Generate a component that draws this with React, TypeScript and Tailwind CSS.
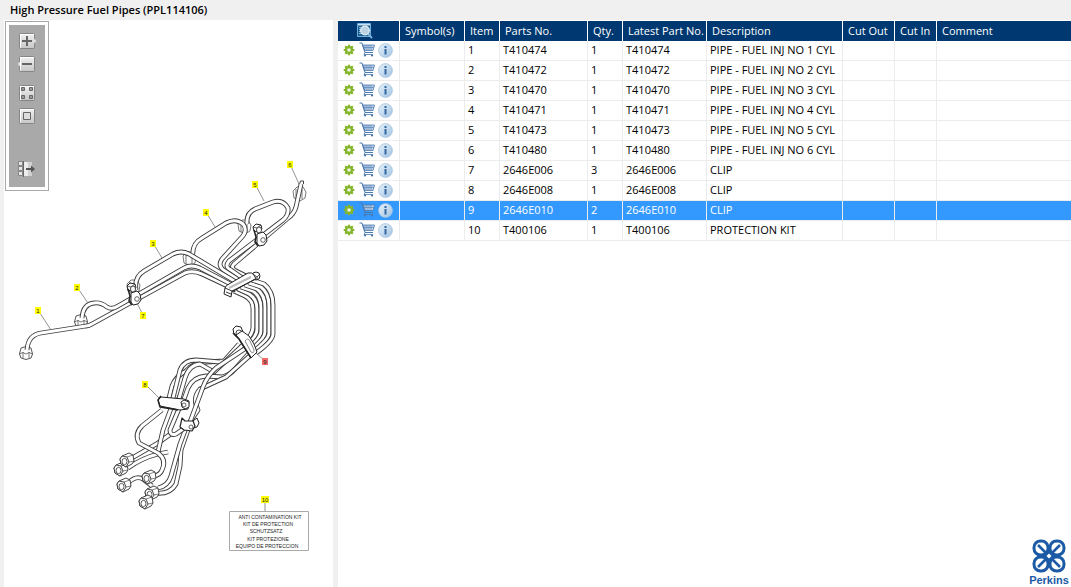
import { useState } from 'react';
import type { ReactNode } from 'react';
import clsx from 'clsx';

interface Part {
  item: number;
  partNo: string;
  qty: number;
  description: string;
}

const parts: Part[] = [
  { item: 1, partNo: 'T410474', qty: 1, description: 'PIPE - FUEL INJ NO 1 CYL' },
  { item: 2, partNo: 'T410472', qty: 1, description: 'PIPE - FUEL INJ NO 2 CYL' },
  { item: 3, partNo: 'T410470', qty: 1, description: 'PIPE - FUEL INJ NO 3 CYL' },
  { item: 4, partNo: 'T410471', qty: 1, description: 'PIPE - FUEL INJ NO 4 CYL' },
  { item: 5, partNo: 'T410473', qty: 1, description: 'PIPE - FUEL INJ NO 5 CYL' },
  { item: 6, partNo: 'T410480', qty: 1, description: 'PIPE - FUEL INJ NO 6 CYL' },
  { item: 7, partNo: '2646E006', qty: 3, description: 'CLIP' },
  { item: 8, partNo: '2646E008', qty: 1, description: 'CLIP' },
  { item: 9, partNo: '2646E010', qty: 2, description: 'CLIP' },
  { item: 10, partNo: 'T400106', qty: 1, description: 'PROTECTION KIT' },
];

const columns = [
  { label: 'Symbol(s)', width: 'w-[65px]' },
  { label: 'Item', width: 'w-[35px]' },
  { label: 'Parts No.', width: 'w-[88px]' },
  { label: 'Qty.', width: 'w-[35px]' },
  { label: 'Latest Part No.', width: 'w-[84px]' },
  { label: 'Description', width: 'w-[136px]' },
  { label: 'Cut Out', width: 'w-[52px]' },
  { label: 'Cut In', width: 'w-[42px]' },
  { label: 'Comment', width: '' },
];

/* ---------- icons ---------- */

function GearIcon() {
  return (
    <svg className="h-3 w-3" viewBox="0 0 12 12">
      <g stroke="#84b52c" strokeWidth="2.2">
        <path d="M6 .7v10.6M.7 6h10.6M2.2 2.2l7.6 7.6M9.8 2.2l-7.6 7.6" />
      </g>
      <circle cx="6" cy="6" r="3" fill="none" stroke="#84b52c" strokeWidth="2.2" />
      <circle cx="6" cy="6" r="1.8" fill="#eef5df" />
    </svg>
  );
}

function CartIcon() {
  return (
    <svg className="h-4 w-4" viewBox="0 0 16 16" fill="none" stroke="#4a78ae">
      <path d="M3.500 3h12l-1.500 5.500H5.500z" fill="#c3d5ea" strokeWidth=".8" />
      <path d="M6 3v5M8 3v5M10 3v5M12 3v5M4 5.500h11" strokeWidth=".6" />
      <path d="M.5 1H3l3 9.500h8" strokeWidth="1" />
      <path d="M6 10.500L5 12.500h9" strokeWidth=".8" />
      <circle cx="6" cy="13.500" r="1.100" fill="#4a78ae" stroke="none" />
      <circle cx="13" cy="13.500" r="1.100" fill="#4a78ae" stroke="none" />
    </svg>
  );
}

function InfoIcon() {
  return (
    <svg className="h-[15px] w-[15px]" viewBox="0 0 15 15">
      <defs>
        <linearGradient id="info-fill" x1="0" y1="0" x2="1" y2="1">
          <stop offset="0" stopColor="#eaf3fa" />
          <stop offset="1" stopColor="#9fc3e2" />
        </linearGradient>
      </defs>
      <circle cx="7.5" cy="7.5" r="6.9" fill="url(#info-fill)" stroke="#a5c4de" strokeWidth=".8" />
      <path d="M6.5 3h2v2h-2zM6.5 6h2v5.500h-2z" fill="#3468a4" />
    </svg>
  );
}

function SearchSheetIcon() {
  return (
    <svg className="h-4 w-4" viewBox="0 0 16 16">
      <path d="M.5 .5h13v13H.5z" fill="#1d5e92" stroke="#6fb0dc" />
      <path d="M1 1h12v1.500H1z" fill="#c8e2f3" />
      <path d="M2 4.500h3M2 6.500h2M2 8.500h2M2 10.500h3" stroke="#8cc1e4" />
      <path d="M11 11l4 4" stroke="#7fb4d8" strokeWidth="2" />
      <circle cx="8" cy="7.500" r="4.300" fill="#b9d2e4" stroke="#e8f3fa" strokeWidth="1.200" />
    </svg>
  );
}

function ToolFace({ children }: { children?: ReactNode }) {
  return (
    <svg className="h-4 w-5" viewBox="0 0 20 16">
      <defs>
        <linearGradient id="tool-face" x1="0" y1="0" x2="0" y2="1">
          <stop offset="0" stopColor="#f2f2f2" />
          <stop offset="1" stopColor="#c6c6c6" />
        </linearGradient>
      </defs>
      <rect x="2.500" y=".5" width="15" height="15" rx="1" fill="url(#tool-face)" stroke="#858585" />
      <path d="M3.500 14.500V1.500h13" fill="none" stroke="#fff" />
      {children}
    </svg>
  );
}

function PerkinsLogo() {
  return (
    <div className="flex w-10 flex-col items-center text-[#1b5aa5]">
      <svg className="h-[34px] w-[34px]" viewBox="0 0 34 34" fill="none" stroke="currentColor">
        <g strokeWidth="3">
          <rect x="2" y="2" width="14" height="14" rx="6.500" />
          <rect x="18" y="2" width="14" height="14" rx="6.500" />
          <rect x="2" y="18" width="14" height="14" rx="6.500" />
          <rect x="18" y="18" width="14" height="14" rx="6.500" />
        </g>
        <path d="M6 6l8 8M28 6l-8 8M6 28l8-8M28 28l-8-8" strokeWidth="2.600" />
        <path d="M17 11l6 6-6 6-6-6z" fill="currentColor" stroke="none" />
        <path d="M17 14.500l2.500 2.500-2.500 2.500-2.500-2.500z" fill="#fff" stroke="none" />
      </svg>
      <span className="font-['Liberation_Sans',sans-serif] text-[11px] leading-[14px] font-bold">Perkins</span>
    </div>
  );
}

/* ---------- drawing ---------- */

// Runs are listed back to front: later pipes cover earlier ones.
const pipes = [
  // tails below the clips
  'M132 458 L158 443 L172 433',
  'M128 468 Q142 458 158 454 L168 452',
  'M176 395 L163 430 L158 452',
  'M128 483 Q136 475 143 479 L152 486',
  'M154 493 Q170 495 176 484 L180 466 L181 450 L190 424',
  'M158 488 Q168 486 171 476 L180 444 L186 428',
  'M181 404 L170 430 Q170 436 176 434 L186 427',
  'M162 410 L142 426 Q134 434 139 443 L158 453 Q167 460 162 470 Q160 475 154 476',
  // bundle between the middle clips
  'M168 402 L172 386 Q176 376 186 371 Q194 362 206 362 L224 361 L239 344',
  'M172 402 L180 370 Q184 360 196 360 L220 362',
  'M178 402 L185 378 Q189 365 200 364 Q207 368 214 372 L244 344',
  'M183 402 L188 388 Q193 377 206 376 L222 377 Q230 375 235 369 L250 352',
  'M186 428 L198 410 Q192 398 200 389 L226 377 L254 352',
  'M190 422 L203 387 Q207 376 216 368 L246 348',
  // loop on the right hand side
  'M234 291 L245 296 Q253 300 253 309 L253 327 Q253 333 246 341',
  'M238 289 L249 294 Q257 299 257 309 L257 329 Q257 336 248 344',
  'M241 287 L253 291 Q261 297 261 308 L261 331 Q261 337 250 347',
  'M245 285 L257 289 Q265 295 265 307 L265 332 Q265 338 252 349',
  'M249 283 L261 287 Q269 293 269 306 L269 333 Q269 339 254 351',
  'M252 280 L264 284 Q273 291 273 305 L273 334 Q273 341 256 353',
  // individual runs
  'M301 184 L296 207 Q294 214 288 218 L234 264 Q230 268 236 271 L252 279',
  'M247 224 Q246 213 255 209 L273 202 Q283 199 288 208 Q289 215 283 220 L229 261 Q224 267 231 270 L248 282',
  'M193 258 Q191 244 202 238 L226 223 Q236 218 243 224 Q248 230 242 237 L222 259 Q217 266 225 271 L245 284',
  'M27 350 Q28 335 41 333 L86 326 Q89 326 92 324 L185 273 Q193 270 202 274 L236 290',
  'M82 318 Q83 304 94 303 Q101 302 107 307 Q112 310 118 306 L184 268 Q191 264 200 268 L238 288',
  'M136 290 Q134 277 144 271 L173 254 Q181 250 189 254 L241 285',
];

const uprightNuts = [
  { x: 26, y: 352 },
  { x: 81, y: 320 },
];

const tiltedNuts = [
  { x: 121, y: 469 },
  { x: 127, y: 460 },
  { x: 124, y: 485 },
  { x: 149, y: 477 },
  { x: 152, y: 493 },
  { x: 146, y: 502 },
];

// Connections seen from behind the pipe ends.
const rearNuts = [
  { x: 133, y: 287 },
  { x: 189, y: 259 },
  { x: 244, y: 227 },
  { x: 299, y: 194 },
];

const callouts = [
  { id: 1, x: 38, y: 310, to: [51, 330] },
  { id: 2, x: 77, y: 287, to: [88, 303] },
  { id: 3, x: 153, y: 243, to: [162, 258] },
  { id: 4, x: 206, y: 212, to: [215, 227] },
  { id: 5, x: 255, y: 184, to: [264, 201] },
  { id: 6, x: 290, y: 164, to: [299, 184] },
  { id: 7, x: 143, y: 315, to: [137, 303] },
  { id: 8, x: 145, y: 384, to: [159, 398] },
  { id: 9, x: 265, y: 361, to: [256, 353] },
  { id: 10, x: 265, y: 499, to: [265, 511] },
];

const kitLines = [
  { text: 'ANTI CONTAMINATION KIT', x: 270, y: 519 },
  { text: 'KIT DE PROTECTION', x: 268, y: 526 },
  { text: 'SCHUTZSATZ', x: 266, y: 533 },
  { text: 'KIT PROTEZIONE', x: 268, y: 541 },
  { text: 'EQUIPO DE PROTECCION', x: 267, y: 548 },
];

function UprightNut({ x, y }: { x: number; y: number }) {
  return (
    <g transform={`translate(${x} ${y})`} fill="#fff" stroke="#444" strokeWidth=".9">
      <path d="M-5 -4 L-6.500 2 L-5 6 L0 7.500 L5 6 L6.500 2 L5 -4 Q0 -7 -5 -4z" />
      <path d="M-6.500 2 Q-3 -1 0 2 Q3 -1 6.500 2 M-3 0 L-3 6 M3 0 L3 6" fill="none" strokeWidth=".7" />
    </g>
  );
}

function TiltedNut({ x, y }: { x: number; y: number }) {
  return (
    <g transform={`translate(${x} ${y})`} fill="#fff" stroke="#333" strokeWidth=".9">
      <path d="M-5 -4 L2 -7 L6 -5 L7 1 L5 4 L-1 7 L-6 4 L-7 -1z" />
      <path d="M-7 -1 L-5 -4 L0 -3 L2 2 L-1 7 L-6 4z" />
      <path d="M0 -3 L6 -5 M2 2 L7 1" strokeWidth=".6" />
      <ellipse cx="-2.500" cy="1.500" rx="2.500" ry="3.200" strokeWidth=".8" />
    </g>
  );
}

function SmallClamp({ x, y }: { x: number; y: number }) {
  return (
    <g transform={`translate(${x} ${y})`} fill="#fff" stroke="#222">
      <path d="M-8 -11 L-5 -14 L0 -13 L1 -9 L-3 -6 L-7 -7z" />
      <path d="M-8 -11 L-4 -10 L0 -13 M-4 -10 L-3 -6" fill="none" strokeWidth=".7" />
      <ellipse cx="-2" cy="-8" rx="2.500" ry="3" strokeWidth=".8" />
      <path d="M-4 -4 L2 -6 L5 -3 L6 3 L3 7 L-2 8 L-4 5z" />
      <path d="M-7 -8 L-5 -1 L-6 4 L-3 8" fill="none" strokeWidth="1.500" />
      <circle cx="2" cy="2" r="2.300" strokeWidth=".7" />
    </g>
  );
}

function PartsDrawing({ activeItem }: { activeItem: number }) {
  return (
    <svg
      className="block h-[567px] w-[329px] shrink-0"
      viewBox="4 20 329 567"
      role="img"
      aria-label="High pressure fuel pipes"
      strokeLinejoin="round"
    >
      {rearNuts.map((nut) => (
        <g key={nut.x} fill="#fff" stroke="#555" strokeWidth=".8">
          <path d={`M${nut.x - 6} ${nut.y - 3}l4 -4 6 0 3 5 -1 6 -5 3 -6 -3z`} />
          <path d={`M${nut.x - 3} ${nut.y - 5}v10M${nut.x + 3} ${nut.y - 5}v10`} />
        </g>
      ))}

      {uprightNuts.map((nut) => (
        <UprightNut key={nut.y} {...nut} />
      ))}

      {pipes.map((d) => (
        <g key={d} fill="none">
          <path d={d} stroke="#3c3c3c" strokeWidth="4.800" />
          <path d={d} stroke="#fff" strokeWidth="3" />
        </g>
      ))}
      <path d="M299.500 184l1-3 3 0 0 3" fill="#fff" stroke="#444" />

      {tiltedNuts.map((nut) => (
        <TiltedNut key={nut.y} {...nut} />
      ))}

      <SmallClamp x={135} y={297} />
      <SmallClamp x={261} y={238} />

      {/* Long clips */}
      <g fill="#fff" stroke="#222">
        <circle cx="256" cy="276" r="4" />
        <path d="M253 274 L257 277 L260 274 M257 277 L257 280" fill="none" strokeWidth=".8" />
        <path d="M225 288 Q226 285 229 284 L248 273 Q252 272 254 275 L256 279 L232 291 L231 297 L224 294z" />
        <path d="M229 288 L251 277" stroke="#bbb" strokeWidth="2" />
        <path d="M225 288 L232 291 M232 292 L255 279 M226 292 L231 294" fill="none" strokeWidth=".9" />

        <path d="M233 329 L236 326 L241 327 L243 332 L238 336 L234 334z" />
        <circle cx="239" cy="333" r="3" strokeWidth=".8" />
        <path d="M236 335 L242 331 L249 336 L254 344 L257 352 L251 358 L239 339z" />
        <path d="M233 333 L239 339 L251 358" fill="none" strokeWidth="1.600" />
        <path d="M245 341 Q248 337 250 341 L254 350 Q254 354 251 352z" stroke="#888" />

        <path d="M158 400 L161 397 L184 399 L189 401 L188 409 L180 410 L160 406z" />
        <path d="M161 396 L158 400 L160 407 L178 410" fill="none" strokeWidth="1.500" />
        <path d="M181 402 L184 400 L189 402 L189 407 L185 409 L182 407z" />
        <circle cx="184" cy="405" r="2" strokeWidth=".7" />

        <path d="M193 421 L197 418 L199 423 L197 427 L193 428z" />
        <path d="M182 418 L185 421 L193 421 L195 426 L192 431 L184 430 L180 427z" strokeWidth="1.200" />
        <circle cx="191" cy="427" r="2" strokeWidth=".7" />
      </g>

      {callouts.map(({ id, x, y, to }) => {
        const active = id === activeItem;
        const half = id === 10 ? 4 : 3;
        return (
          <g key={id}>
            <line x1={x} y1={y} x2={to[0]} y2={to[1]} stroke="#777" strokeWidth=".8" />
            <rect
              x={x - half}
              y={y - 3}
              width={half * 2}
              height="7"
              fill={active ? '#f26a6a' : '#ffff00'}
            />
            <text
              x={x}
              y={y + 3}
              textAnchor="middle"
              className="font-['Liberation_Sans',sans-serif] text-[6px]"
              fill="#222"
            >
              {id}
            </text>
          </g>
        );
      })}

      <rect x="229.500" y="511.500" width="79" height="39" fill="none" stroke="#aaa" />
      {kitLines.map((line) => (
        <text
          key={line.text}
          x={line.x}
          y={line.y}
          textAnchor="middle"
          className="font-['Liberation_Sans',sans-serif] text-[5px]"
          fill="#222"
        >
          {line.text}
        </text>
      ))}
    </svg>
  );
}

function DrawingToolbar() {
  return (
    <div className="absolute top-px left-px border border-[#a9a9a9] bg-white p-[3px]">
      <div role="toolbar" aria-label="Drawing tools" className="flex w-9 flex-col items-center bg-[#a9a9a9] pt-2 pb-[10px]">
        <button type="button" aria-label="Zoom in">
          <ToolFace>
            <path d="M17 5.500L19.500 8 17 10.500z" fill="#ddd" />
            <path d="M10 3v10M5 8h10" stroke="#666" strokeWidth="2" />
          </ToolFace>
        </button>
        <button type="button" aria-label="Zoom out" className="mt-[7px]">
          <ToolFace>
            <path d="M3 5.500L.5 8 3 10.500z" fill="#ddd" />
            <path d="M5 8h10" stroke="#666" strokeWidth="2" />
          </ToolFace>
        </button>
        <button type="button" aria-label="Fit drawing" className="mt-[13px]">
          <ToolFace>
            <g fill="#999" stroke="#666">
              <path d="M4.500 2.500h3v3h-3zM12.500 2.500h3v3h-3zM4.500 10.500h3v3h-3zM12.500 10.500h3v3h-3z" />
            </g>
          </ToolFace>
        </button>
        <button type="button" aria-label="Actual size" className="mt-[7px]">
          <ToolFace>
            <path d="M6.500 4.500h7v7h-7z" fill="#ddd" stroke="#666" />
          </ToolFace>
        </button>
        <button type="button" aria-label="Detach panel" className="mt-[37px]">
          <svg className="h-4 w-5" viewBox="0 0 20 16">
            <path d="M7 1h8v14H7z" fill="#d0d0d0" />
            <path d="M1.500 .5h4v4h-4zM1.500 5.500h4v4h-4zM1.500 10.500h4v4h-4z" fill="#e8e8e8" stroke="#858585" />
            <path d="M6.500 0v16" stroke="#666" />
            <path d="M7 1h4v14H7z" fill="#ececec" />
            <path d="M9 8h7" stroke="#555" strokeWidth="2" />
            <path d="M14 4.500L18 8l-4 3.500z" fill="#555" />
          </svg>
        </button>
      </div>
    </div>
  );
}

/* ---------- table ---------- */

function PartsTable({ activeItem, onSelect }: { activeItem: number; onSelect: (item: number) => void }) {
  return (
    <table className="w-full table-fixed border-separate border-spacing-0 text-left text-[11px] leading-4 whitespace-nowrap">
      <thead className="bg-[#003971] text-white">
        <tr className="h-5">
          <th scope="col" className="w-[62px] border-r border-white p-0">
            <button type="button" aria-label="Search parts" className="mx-auto block pr-2">
              <SearchSheetIcon />
            </button>
          </th>
          {columns.map((col) => (
            <th
              key={col.label}
              scope="col"
              className={clsx('border-r border-white py-0 pr-0 pl-[5px] font-normal last:border-r-0', col.width)}
            >
              {col.label}
            </th>
          ))}
        </tr>
      </thead>
      <tbody>
        {parts.map((part) => {
          const active = part.item === activeItem;
          const cells = ['', part.item, part.partNo, part.qty, part.partNo, part.description, '', '', ''];
          return (
            <tr
              key={part.item}
              aria-selected={active}
              onClick={() => onSelect(part.item)}
              className={clsx('h-5', active ? 'bg-[#3399ff] text-white' : 'text-black')}
            >
              <td className="border-r border-b border-[#ececec] p-0">
                <div className="flex items-center pb-px pl-[5px]">
                  <button type="button" aria-label={`Options for item ${part.item}`}>
                    <GearIcon />
                  </button>
                  <button type="button" aria-label={`Add item ${part.item} to cart`} className="ml-1">
                    <CartIcon />
                  </button>
                  <button type="button" aria-label={`Details of item ${part.item}`} className="ml-[3px]">
                    <InfoIcon />
                  </button>
                </div>
              </td>
              {cells.map((cell, i) => (
                <td key={i} className="border-r border-b border-[#ececec] pt-0 pr-0 pb-[2px] pl-[3px] last:border-r-0">
                  {cell}
                </td>
              ))}
            </tr>
          );
        })}
      </tbody>
    </table>
  );
}

export default function App() {
  const [activeItem, setActiveItem] = useState(9);

  return (
    <div className="flex min-h-screen flex-col bg-[#f0f0f0] font-['Open_Sans','Noto_Sans',sans-serif]">
      <h1 className="h-5 pl-[10px] text-[11px] leading-5 font-semibold text-black">
        High Pressure Fuel Pipes (PPL114106)
      </h1>
      <main className="flex flex-1 gap-[5px] pl-1">
        <section className="relative shrink-0 bg-white">
          <PartsDrawing activeItem={activeItem} />
          <DrawingToolbar />
        </section>
        <section className="flex min-w-0 flex-1 flex-col justify-between bg-white pt-px">
          <PartsTable activeItem={activeItem} onSelect={setActiveItem} />
          <footer className="flex justify-end pr-[2px]">
            <PerkinsLogo />
          </footer>
        </section>
      </main>
    </div>
  );
}
